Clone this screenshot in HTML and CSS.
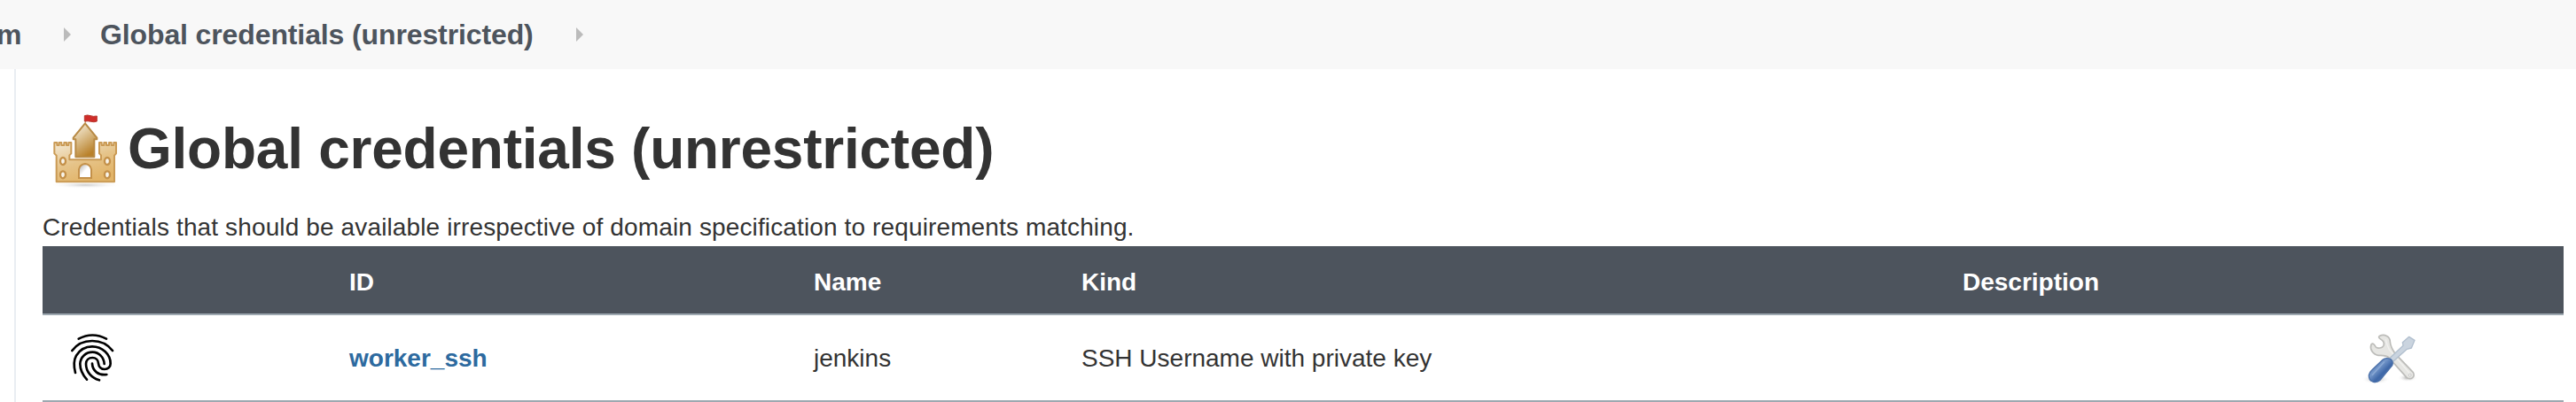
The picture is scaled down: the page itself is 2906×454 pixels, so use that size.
FILE: index.html
```html
<!DOCTYPE html>
<html lang="en">
<head>
<meta charset="utf-8">
<title>Global credentials (unrestricted)</title>
<link rel="stylesheet" href="styles.css">
</head>
<body>
<nav class="breadcrumbs">
  <span class="crumb crumb-cut">m</span>
  <svg class="chevron" viewBox="0 0 8 16"><path d="M0 0L8 8L0 16Z"/></svg>
  <span class="crumb">Global credentials (unrestricted)</span>
  <svg class="chevron chevron-end" viewBox="0 0 8 16"><path d="M0 0L8 8L0 16Z"/></svg>
</nav>
<main class="panel">
  <h1 class="title">
    <svg class="castle" viewBox="0 0 300 360">
      <defs>
        <linearGradient id="tower" x1="0" y1="0" x2=".5" y2="1"><stop offset="0" stop-color="#fbf6ea"/><stop offset=".45" stop-color="#dec496"/><stop offset="1" stop-color="#b9812a"/></linearGradient>
        <linearGradient id="wall" x1="0" y1="0" x2=".5" y2="1"><stop offset="0" stop-color="#f3e9d5"/><stop offset=".55" stop-color="#e6c48a"/><stop offset="1" stop-color="#e2b468"/></linearGradient>
        <linearGradient id="door" x1="0" y1="0" x2="1" y2="1"><stop offset="0" stop-color="#aaa"/><stop offset=".5" stop-color="#fff"/></linearGradient>
        <radialGradient id="shade"><stop offset="0" stop-color="#ccc"/><stop offset="1" stop-color="#fff" stop-opacity="0"/></radialGradient>
      </defs>
      <ellipse cx="169" cy="297" rx="122" ry="12" fill="url(#shade)"/>
      <path d="M169 86V62" stroke="#b78a4a" stroke-width="3"/>
      <path d="M166 62Q176 58 186 62T208 63V81Q198 85 188 82T166 81Z" fill="#cf2d2a" stroke="#b83a30" stroke-width="3"/>
      <path d="M168 88L208 137V142H199V202H136V142H128V137Z" fill="url(#tower)" stroke="#b88a45" stroke-width="6" stroke-linejoin="round"/>
      <path d="M64 153H73V162H80V153H88V162H97V153H105V162H112V153H121V190L115 196V211H222V196L216 190V153H224V162H232V153H240V162H249V153H257V162H265V153H273V190L267 197V286H71V197L64 190Z" fill="url(#wall)" stroke="#ca9a54" stroke-width="6" stroke-linejoin="round"/>
      <path d="M147 273V244Q150 227 168 225Q186 227 189 244V273Z" fill="url(#door)" stroke="#c4914a" stroke-width="6"/>
      <g fill="#f8f4ea" stroke="#c4914a" stroke-width="7"><ellipse cx="93" cy="216" rx="9" ry="12"/><ellipse cx="243" cy="216" rx="9" ry="12"/><ellipse cx="93" cy="262" rx="9" ry="12"/><ellipse cx="243" cy="262" rx="9" ry="12"/></g>
    </svg>
    <span class="title-text">Global credentials (unrestricted)</span>
  </h1>
  <p class="summary">Credentials that should be available irrespective of domain specification to requirements matching.</p>
  <table class="credentials">
    <colgroup><col class="c-icon"><col class="c-id"><col class="c-name"><col class="c-kind"><col class="c-desc"><col class="c-tools"></colgroup>
    <thead>
      <tr><th></th><th>ID</th><th>Name</th><th>Kind</th><th>Description</th><th></th></tr>
    </thead>
    <tbody>
      <tr>
        <td class="icon-cell">
          <svg class="icon" viewBox="0 -3 270 270" fill="none" stroke="#000" stroke-width="8" stroke-linecap="round">
            <path d="M86 68Q133 43 180 68"/>
            <path d="M64 108C80 86 105 75 132 75C160 75 184 86 201 108"/>
            <path d="M75 183C69 160 70 139 78 125C90 105 110 94 132 94C166 94 194 120 194 152C194 163 185 171 174 171C163 171 154 163 153 151C152 140 144 132 133 132C120 132 111 141 111 153C111 180 130 200 156 208"/>
            <path d="M114 206C97 187 91 170 91 153C92 130 110 113 133 113C155 113 172 131 173 153"/>
            <path d="M132 152C133 176 153 193 181 189"/>
          </svg>
        </td>
        <td class="text-cell"><a class="link">worker_ssh</a></td>
        <td class="text-cell">jenkins</td>
        <td class="text-cell">SSH Username with private key</td>
        <td></td>
        <td>
          <svg class="icon" viewBox="0 -3 270 270">
            <defs>
              <linearGradient id="handle" x1="0" y1="0" x2="1" y2="1"><stop offset="0" stop-color="#4a72b0"/><stop offset=".4" stop-color="#7396c9"/><stop offset=".6" stop-color="#3f68a8"/><stop offset="1" stop-color="#587fb9"/></linearGradient>
              <radialGradient id="floor"><stop offset="0" stop-color="#aaa"/><stop offset="1" stop-color="#fff" stop-opacity="0"/></radialGradient>
            </defs>
            <ellipse cx="91" cy="205" rx="48" ry="16" fill="url(#floor)"/>
            <ellipse cx="198" cy="200" rx="34" ry="14" fill="url(#floor)"/>
            <path d="M104 58C120 50 139 61 139 78C140 92 146 104 156 118L217 182C225 197 210 209 195 199L135 132C124 123 112 125 99 124C80 121 69 103 75 87C81 80 86 88 90 95C96 103 113 99 117 91C121 79 114 74 105 68C99 64 100 60 104 58Z" fill="#e6e6e3" stroke="#bcbcb9" stroke-width="5" stroke-linejoin="round"/>
            <path d="M124 70Q128 88 135 103L205 185" fill="none" stroke="#f2f2f0" stroke-width="4"/>
            <circle cx="206" cy="191" r="4" fill="#fff" stroke="#aaa" stroke-width="2"/>
            <path d="M137 134L183 91L181 80L203 61L222 73L211 99L196 103L149 145Z" fill="#cad4df" stroke="#b1bfce" stroke-width="4" stroke-linejoin="round"/>
            <path d="M114 139Q124 130 141 137Q151 145 146 158L105 208Q94 218 80 213Q66 207 67 191Q69 181 77 174Z" fill="url(#handle)" stroke="#4a6fa8" stroke-width="4"/>
            <path d="M118 147L79 190" stroke="#a5bfe2" stroke-width="5" stroke-linecap="round" opacity=".45"/>
          </svg>
        </td>
      </tr>
    </tbody>
  </table>
</main>
</body>
</html>
```
FILE: styles.css
```css
* { box-sizing: border-box; }

body {
  margin: 0;
  height: 454px;
  overflow: hidden;
  background: #fff;
  color: #333;
  font-family: "Liberation Sans", Arial, sans-serif;
  font-size: 28px;
}

.breadcrumbs {
  display: flex;
  align-items: center;
  height: 78px;
  background: #f8f8f8;
  color: #4d545d;
  font-size: 32px;
  font-weight: bold;
  letter-spacing: -0.12px;
  white-space: nowrap;
}

.crumb { line-height: 36px; }
.crumb-cut { width: 28px; margin-left: -4px; margin-right: 48px; }
.chevron { width: 8px; height: 16px; fill: #bbb; margin-right: 33px; flex: none; }
.chevron-end { margin-left: 48px; }

.panel {
  margin-left: 16px;
  border-left: 2px solid #e9edf2;
  height: 376px;
  padding: 32px 14px 0 30px;
}

.title {
  display: flex;
  align-items: center;
  height: 120px;
  margin: 0 0 0 -8px;
  font-size: 64px;
  line-height: 74px;
  letter-spacing: -0.24px;
  white-space: nowrap;
}

.title-text { padding-bottom: 5px; }

.castle { width: 100px; height: 120px; margin-right: 4px; flex: none; }

.summary {
  margin: 11px 0 0;
  height: 37px;
  line-height: 32px;
  letter-spacing: 0.13px;
}

.credentials {
  width: 2844px;
  table-layout: fixed;
  border-collapse: separate;
  border-spacing: 0;
}

.c-icon { width: 330px; }
.c-id { width: 524px; }
.c-name { width: 302px; }
.c-kind { width: 994px; }
.c-desc { width: 436px; }
.c-tools { width: 258px; }

th, td {
  padding: 0 0 0 16px;
  border-bottom: 2px solid #9da8b0;
  text-align: left;
  vertical-align: middle;
  white-space: nowrap;
}

th { height: 78px; padding-top: 5px; background: #4d545d; color: #fff; }
td { height: 98px; }
.text-cell { padding-top: 1px; }
.icon-cell { padding-left: 12px; }
.icon { display: block; width: 90px; height: 90px; }
.link { color: #2d6a9f; font-weight: bold; }
```
